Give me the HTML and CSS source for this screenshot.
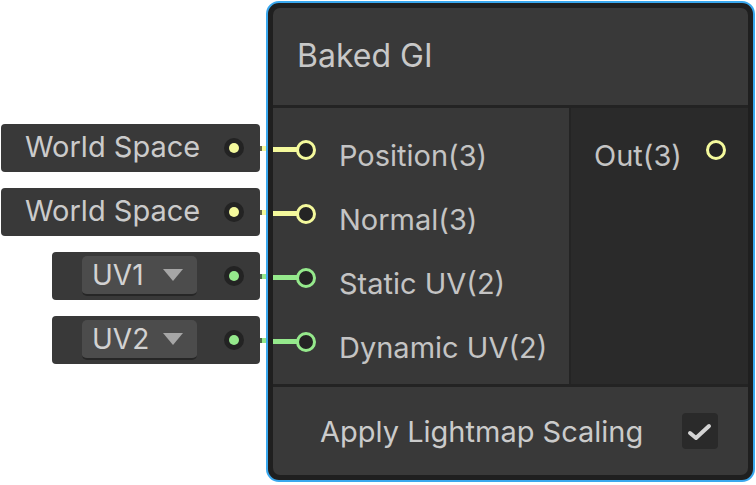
FILE: index.html
```html
<!DOCTYPE html>
<html lang="en">

<head>
    <meta charset="UTF-8">
    <title>Baked GI</title>
    <link rel="stylesheet" href="styles.css">
</head>

<body>

    <div class="graph">
        <div class="inputs">
            <div class="slot">
                <div class="field field-wide">
                    <span class="field-label">World Space</span>
                    <span class="dot v3"></span>
                </div>
                <span class="wire-dim v3"></span>
                <span class="wire-out v3"></span>
            </div>
            <div class="slot">
                <div class="field field-wide">
                    <span class="field-label">World Space</span>
                    <span class="dot v3"></span>
                </div>
                <span class="wire-dim v3"></span>
                <span class="wire-out v3"></span>
            </div>
            <div class="slot">
                <div class="field field-narrow">
                    <div class="dropdown">
                        <span>UV1</span>
                        <svg class="caret" width="20" height="12" viewBox="0 0 20 12"><polygon points="0,0 20,0 10,12" /></svg>
                    </div>
                    <span class="dot v2"></span>
                </div>
                <span class="wire-dim v2"></span>
                <span class="wire-out v2"></span>
            </div>
            <div class="slot">
                <div class="field field-narrow">
                    <div class="dropdown">
                        <span>UV2</span>
                        <svg class="caret" width="20" height="12" viewBox="0 0 20 12"><polygon points="0,0 20,0 10,12" /></svg>
                    </div>
                    <span class="dot v2"></span>
                </div>
                <span class="wire-dim v2"></span>
                <span class="wire-out v2"></span>
            </div>
        </div>

        <div class="node">
            <div class="node-inner">
                <div class="node-title">Baked GI</div>
                <div class="node-ports">
                    <div class="port-col port-in">
                        <div class="port v3"><span class="port-ring"></span><span class="port-label">Position(3)</span></div>
                        <div class="port v3"><span class="port-ring"></span><span class="port-label">Normal(3)</span></div>
                        <div class="port v2"><span class="port-ring"></span><span class="port-label">Static UV(2)</span></div>
                        <div class="port v2"><span class="port-ring"></span><span class="port-label">Dynamic UV(2)</span></div>
                    </div>
                    <div class="port-col port-out">
                        <div class="port v3"><span class="port-label">Out(3)</span><span class="port-ring"></span></div>
                    </div>
                </div>
                <div class="node-settings">
                    <span class="setting-label">Apply Lightmap Scaling</span>
                    <span class="checkbox">
                        <svg width="36" height="36" viewBox="0 0 36 36"><polyline points="8,20 14,25 27,13" /></svg>
                    </span>
                </div>
            </div>
        </div>
    </div>

</body>

</html>
```

FILE: styles.css
```css
* {
    box-sizing: border-box;
}

body {
    margin: 0;
    background-color: #fff;
    font-family: Inter, "Noto Sans", sans-serif;
    color: #c4c4c4;
}

.graph {
    display: flex;
    align-items: flex-start;
    width: 756px;
    height: 485px;
}

/* inline input fields on the left */
.inputs {
    width: 266px;
    flex-shrink: 0;
    padding-top: 116px;
    display: flex;
    flex-direction: column;
}

.slot {
    position: relative;
    height: 64px;
    display: flex;
    align-items: center;
    justify-content: flex-end;
    padding-right: 6px;
}

.field {
    position: relative;
    z-index: 1;
    height: 48px;
    display: flex;
    align-items: center;
    background-color: #393939;
    border-radius: 4px;
    padding-right: 16px;
}

.field-wide {
    width: 259px;
    padding-left: 24px;
}

.field-narrow {
    width: 208px;
    padding-left: 30px;
}

.field-label {
    flex: 1;
    font-size: 29px;
    color: #cbcbcb;
    padding-bottom: 3px;
    white-space: nowrap;
}

.dropdown {
    flex: 1;
    margin-right: 27px;
    height: 40px;
    display: flex;
    align-items: center;
    justify-content: space-between;
    padding: 0 14px 0 10px;
    background-color: #4c4c4c;
    border-radius: 5px;
    border-bottom: 2px solid #262626;
    font-size: 28px;
    color: #d2d2d2;
}

.caret polygon {
    fill: #a6a6a6;
}

.dot {
    width: 20px;
    height: 20px;
    border-radius: 50%;
    background-color: #232323;
    display: flex;
    align-items: center;
    justify-content: center;
}

.dot::after {
    content: "";
    width: 10px;
    height: 10px;
    border-radius: 50%;
    background-color: var(--port);
}

.wire-dim,
.wire-out {
    position: absolute;
    top: 30px;
    height: 5px;
}

.wire-dim {
    left: 240px;
    width: 22px;
    background-color: var(--dim);
}

.wire-out {
    left: 262px;
    width: 6px;
    background-color: var(--port);
}

.v3 {
    --port: #f4f99c;
    --dim: #65684b;
}

.v2 {
    --port: #95e98c;
    --dim: #4b6949;
}

/* node */
.node {
    position: relative;
    z-index: 2;
    margin-top: 1px;
    width: 489px;
    height: 481px;
    border: 2px solid #3aa8ee;
    border-radius: 13px;
    background-color: #1f1f1f;
    padding: 5px;
}

.node-inner {
    height: 100%;
    border-radius: 7px;
    overflow: hidden;
    display: flex;
    flex-direction: column;
}

.node-title {
    height: 100px;
    flex-shrink: 0;
    display: flex;
    align-items: center;
    padding: 0 24px 2px;
    background-color: #393939;
    border-bottom: 3px solid #232323;
    font-size: 32px;
    color: #c8c8c8;
}

.node-ports {
    height: 279px;
    flex-shrink: 0;
    display: flex;
    border-bottom: 3px solid #232323;
}

.port-col {
    padding-top: 10px;
}

.port-in {
    width: 298px;
    background-color: #383838;
    border-right: 2px solid #242424;
}

.port-out {
    flex: 1;
    background-color: #2a2a2a;
    padding-left: 23px;
    padding-right: 22px;
}

.port {
    position: relative;
    height: 64px;
    display: flex;
    align-items: center;
}

.port-in .port {
    padding-left: 23px;
}

.port-in .port::before {
    content: "";
    position: absolute;
    left: 0;
    top: 29px;
    width: 26px;
    height: 5px;
    background-color: var(--port);
}

.port-ring {
    position: relative;
    width: 20px;
    height: 20px;
    flex-shrink: 0;
    border-radius: 50%;
    border: 3px solid var(--port);
    background-color: #242424;
}

.port-label {
    font-size: 29px;
    padding-top: 10px;
    white-space: nowrap;
}

.port-in .port-label {
    margin-left: 23px;
}

.port-out .port-label {
    flex: 1;
}

.node-settings {
    flex: 1;
    display: flex;
    align-items: center;
    justify-content: space-between;
    padding: 0 30px 0 47px;
    background-color: #393939;
    font-size: 29px;
    color: #cbcbcb;
}

.checkbox {
    width: 36px;
    height: 36px;
    border-radius: 4px;
    background-color: #2a2a2a;
}

.checkbox svg {
    display: block;
}

.checkbox polyline {
    fill: none;
    stroke: #d4d4d4;
    stroke-width: 4;
    stroke-linecap: round;
    stroke-linejoin: round;
}
```
